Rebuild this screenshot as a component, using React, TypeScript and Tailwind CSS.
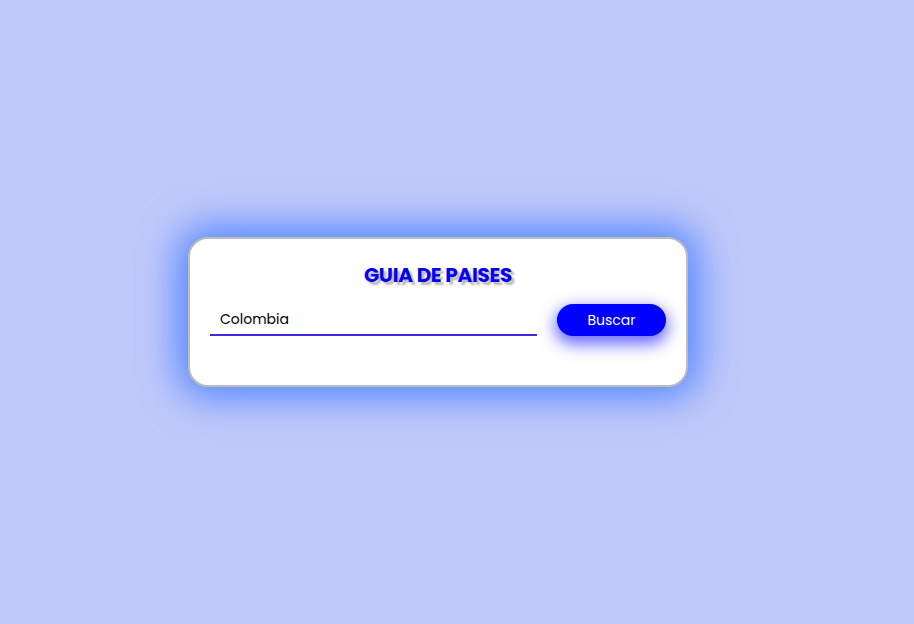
import React from "react";

export default function App() {
  return (
    <div className="min-h-screen w-full bg-[#c1c8fa] flex items-center pl-[188px]" style={{ minHeight: 624 }}>
      <div className="w-[500px] h-[150px] bg-white border-2 border-[#bcbcbc] rounded-[20px] shadow-[0_0_38px_10px_#4f86ff] flex flex-col pt-[22px] px-[20px]">
        <h1 className="h-[28px] leading-[28px] text-center text-[20px] font-bold text-[#0a00f0] [text-shadow:3px_3px_2px_#b8b8b8] font-['Poppins','Inter',sans-serif] tracking-[-0.3px]">
          GUIA DE PAISES
        </h1>
        <div className="mt-[15px] flex items-center gap-[20px]">
          <div className="w-[327px] h-[32px] border-b-2 border-[#3a2be0] flex items-center pl-[10px]">
            <span className="text-[14px] text-black font-['Poppins','Inter',sans-serif]">Colombia</span>
          </div>
          <button className="w-[109px] h-[32px] rounded-full bg-[#0000ff] text-white text-[14px] font-['Poppins','Inter',sans-serif] shadow-[0_6px_16px_2px_rgba(40,40,255,0.7)]">
            Buscar
          </button>
        </div>
      </div>
    </div>
  );
}
